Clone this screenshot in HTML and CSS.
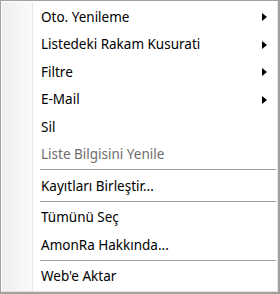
FILE: index.html
```html
<!DOCTYPE html>
<html lang="tr">
<head>
    <meta charset="UTF-8">
    <title>Menu</title>
    <link rel="stylesheet" href="styles.css">
</head>
<body>
    <div class="menu">
        <div class="menu-inner">
            <div class="item sub"><span>Oto. Yenileme</span></div>
            <div class="item sub"><span>Listedeki Rakam Kusurati</span></div>
            <div class="item sub"><span>Filtre</span></div>
            <div class="item sub"><span>E-Mail</span></div>
            <div class="item"><span>Sil</span></div>
            <div class="item disabled"><span>Liste Bilgisini Yenile</span></div>
            <div class="sep"></div>
            <div class="item"><span>Kayıtları Birleştir...</span></div>
            <div class="sep"></div>
            <div class="item"><span>Tümünü Seç</span></div>
            <div class="item"><span>AmonRa Hakkında...</span></div>
            <div class="sep"></div>
            <div class="item"><span>Web'e Aktar</span></div>
        </div>
    </div>
</body>
</html>
```

FILE: styles.css
```css
body {
    margin: 0;
    background: #fff;
}

.menu {
    width: 280px;
    height: 294px;
    box-sizing: border-box;
    border: 1px solid #a0a0a0;
    border-width: 1px 2px 2px 1px;
    background: #fff;
    font-family: "Noto Sans", "Open Sans", sans-serif;
    font-size: 13.5px;
    color: #000;
}

.menu-inner {
    height: 100%;
    box-sizing: border-box;
    border: 1px solid #fff;
    border-right-color: #e3e3e3;
    border-bottom-color: #e3e3e3;
    padding-top: 1px;
    background: linear-gradient(to right, #efefef 0, #fafafa 30px, #e6e6e6 30px, #e6e6e6 31px, #fff 31px);
}

.item {
    height: 27.5px;
    display: flex;
    align-items: center;
    padding-left: 39px;
    position: relative;
}

.item.disabled {
    color: #6d6d6d;
}

/* submenu arrow */
.item.sub::after {
    content: "";
    position: absolute;
    left: 260px;
    top: 10px;
    border-left: 5px solid #000;
    border-top: 4px solid transparent;
    border-bottom: 4px solid transparent;
}

.sep {
    height: 3px;
    margin-left: 38px;
    margin-right: 1px;
    border-top: 1px solid #a0a0a0;
    border-bottom: 1px solid #fff;
    box-sizing: border-box;
    margin-top: 1px;
}
```
